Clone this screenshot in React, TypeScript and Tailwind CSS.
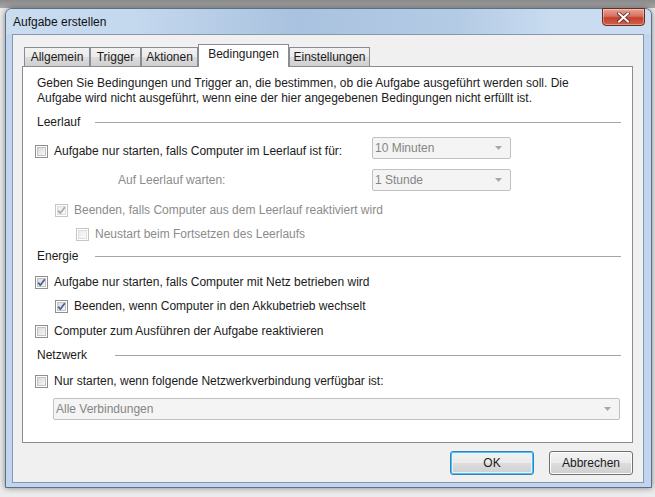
import React from 'react';

// Windows 7 "Aufgabe erstellen" dialog, Bedingungen tab.
const FONT = { fontFamily: '"Liberation Sans", Arial, sans-serif' };

type BoxProps = { checked?: boolean; disabled?: boolean };

function Checkbox({ checked, disabled }: BoxProps) {
  const border = disabled ? '#c6c6c6' : '#8e8f8f';
  const check = disabled ? '#a9a9a9' : '#4a5f97';
  return (
    <svg width="13" height="13" viewBox="0 0 13 13" className="shrink-0">
      <defs>
        <linearGradient id={disabled ? 'cbd' : 'cbe'} x1="0" y1="0" x2="1" y2="1">
          <stop offset="0" stopColor={disabled ? '#ececec' : '#d8d8d8'} />
          <stop offset="1" stopColor={disabled ? '#fbfbfb' : '#f8f8f8'} />
        </linearGradient>
      </defs>
      <rect x="0.5" y="0.5" width="12" height="12" fill="#fff" stroke={border} />
      <rect x="2.5" y="2.5" width="8" height="8" fill={`url(#${disabled ? 'cbd' : 'cbe'})`} stroke={disabled ? '#dedede' : '#c4c4c4'} />
      {checked && (
        <path d="M3.2 6.6 L5.3 9.2 L9.8 3.3" fill="none" stroke={check} strokeWidth="1.7" strokeLinejoin="round" />
      )}
    </svg>
  );
}

function CheckRow({
  label,
  checked,
  disabled,
  indent,
  mt,
}: BoxProps & { label: string; indent: string; mt: string }) {
  return (
    <div className={`flex h-[16px] items-center gap-[6px] ${indent} ${mt}`}>
      <Checkbox checked={checked} disabled={disabled} />
      <span className={disabled ? 'text-[#8b8b8b]' : 'text-[#1b1b1b]'}>{label}</span>
    </div>
  );
}

function Group({ label, lineStart, mt }: { label: string; lineStart: string; mt: string }) {
  return (
    <div className={`flex h-[16px] items-center pl-[14px] pr-[11px] ${mt}`}>
      <span className={`${lineStart} shrink-0 text-[#1b1b1b]`}>{label}</span>
      <div className="h-px flex-1 bg-[#a5a5a5]" />
    </div>
  );
}

function Select({ value, width }: { value: string; width: string }) {
  return (
    <div
      className={`flex h-[22px] ${width} items-center justify-between rounded-[2px] border border-[#c2c2c2] bg-[#f4f4f4] pl-[2px] pr-[8px] text-[#858585]`}
    >
      <span>{value}</span>
      <svg width="7" height="4" viewBox="0 0 7 4">
        <path d="M0 0 H7 L3.5 4 Z" fill="#a8a8a8" />
      </svg>
    </div>
  );
}

function Tab({ label, w, active }: { label: string; w: string; active?: boolean }) {
  if (active) {
    return (
      <div
        className={`relative z-10 -mb-px flex h-[23px] ${w} items-center justify-center border border-b-0 border-[#898c95] bg-white pb-[3px] text-[#1b1b1b]`}
      >
        {label}
      </div>
    );
  }
  return (
    <div
      className={`flex h-[19px] ${w} items-center justify-center border border-b-0 border-[#898c95] bg-[linear-gradient(to_bottom,#f2f2f2,#ebebeb_50%,#dddddd_51%,#cfcfcf)] pt-[1px] text-[#1b1b1b]`}
    >
      {label}
    </div>
  );
}

function Button({ label, focused }: { label: string; focused?: boolean }) {
  return (
    <div
      className={`flex h-[24px] w-[84px] items-center justify-center rounded-[3px] border bg-[linear-gradient(to_bottom,#f2f2f2,#ebebeb_50%,#dddddd_51%,#cfcfcf)] text-[#1b1b1b] ${
        focused
          ? 'border-[#3c7fb1] shadow-[inset_0_0_0_1px_#48c2f9,inset_0_0_0_2px_#e3f4fc]'
          : 'border-[#707070] shadow-[inset_0_0_0_1px_#fcfcfc]'
      }`}
    >
      {label}
    </div>
  );
}

export default function App() {
  return (
    <div
      className="h-[497px] w-[655px] overflow-hidden bg-[linear-gradient(to_bottom,#8a8a8a_0px,#a9a9a9_8px,#ececec_8px)] pl-[5px] pt-[8px] text-[12px] leading-[15px]"
      style={FONT}
    >
      {/* window frame */}
      <div className="flex h-[480px] w-[647px] flex-col rounded-t-[7px] border border-[#5d6f86] bg-[#c1d6ee] shadow-[0_0_6px_rgba(0,0,0,0.45)]">
        {/* title bar */}
        <div className="flex h-[25px] shrink-0 items-start justify-between rounded-t-[6px] bg-[linear-gradient(to_right,#c9dcf0_0%,#c4d8ee_20%,#a9c2df_45%,#b4cbe5_70%,#c9dcf0_85%)] pl-[7px] pr-[6px]">
          <span className="mt-[6px] text-[12px] text-[#111]">Aufgabe erstellen</span>
          <div className="-mt-px flex h-[18px] w-[43px] items-center justify-center rounded-b-[4px] border border-[#6b2a22] bg-[linear-gradient(to_bottom,#e8a496,#d6715f_45%,#c4402b_55%,#d1614c)] shadow-[inset_0_0_0_1px_rgba(255,255,255,0.35)]">
            <svg width="13" height="11" viewBox="0 0 13 11">
              <path d="M2 1.5 L11 9.5 M11 1.5 L2 9.5" stroke="#5a2a22" strokeWidth="3.6" strokeLinecap="square" />
              <path d="M2 1.5 L11 9.5 M11 1.5 L2 9.5" stroke="#ffffff" strokeWidth="2" strokeLinecap="square" />
            </svg>
          </div>
        </div>

        {/* client area */}
        <div className="ml-[6px] flex h-[449px] w-[632px] flex-col border border-[#8797ab] bg-[#f0f0f0] pl-[9px] pt-[9px]">
          <div className="flex items-end pl-[2px]">
            <Tab label="Allgemein" w="w-[66px]" />
            <Tab label="Trigger" w="w-[51px]" />
            <Tab label="Aktionen" w="w-[57px]" />
            <Tab label="Bedingungen" w="w-[91px]" active />
            <Tab label="Einstellungen" w="w-[81px]" />
          </div>

          <div className="flex h-[377px] w-[611px] flex-col border border-[#898c95] bg-white">
            <p className="mt-[9px] whitespace-nowrap pl-[14px] text-[#1b1b1b]">
              Geben Sie Bedingungen und Trigger an, die bestimmen, ob die Aufgabe ausgeführt werden soll. Die
              <br />
              Aufgabe wird nicht ausgeführt, wenn eine der hier angegebenen Bedingungen nicht erfüllt ist.
            </p>

            <Group label="Leerlauf" lineStart="w-[58px]" mt="mt-[8px]" />

            <div className="mt-[7px] flex h-[22px] pl-[12px]">
              <div className="w-[337px] pt-[6px]">
                <CheckRow label="Aufgabe nur starten, falls Computer im Leerlauf ist für:" indent="" mt="" />
              </div>
              <Select value="10 Minuten" width="w-[139px]" />
            </div>

            <div className="mt-[10px] flex h-[22px] items-center pl-[12px]">
              <div className="w-[337px] pl-[83px] text-[#8b8b8b]">Auf Leerlauf warten:</div>
              <Select value="1 Stunde" width="w-[139px]" />
            </div>

            <CheckRow label="Beenden, falls Computer aus dem Leerlauf reaktiviert wird" checked disabled indent="pl-[32px]" mt="mt-[11px]" />
            <CheckRow label="Neustart beim Fortsetzen des Leerlaufs" disabled indent="pl-[53px]" mt="mt-[8px]" />

            <Group label="Energie" lineStart="w-[58px]" mt="mt-[6px]" />

            <CheckRow label="Aufgabe nur starten, falls Computer mit Netz betrieben wird" checked indent="pl-[12px]" mt="mt-[10px]" />
            <CheckRow label="Beenden, wenn Computer in den Akkubetrieb wechselt" checked indent="pl-[32px]" mt="mt-[8px]" />
            <CheckRow label="Computer zum Ausführen der Aufgabe reaktivieren" indent="pl-[12px]" mt="mt-[9px]" />

            <Group label="Netzwerk" lineStart="w-[78px]" mt="mt-[8px]" />

            <CheckRow label="Nur starten, wenn folgende Netzwerkverbindung verfügbar ist:" indent="pl-[12px]" mt="mt-[10px]" />

            <div className="mt-[9px] pl-[30px]">
              <Select value="Alle Verbindungen" width="w-[567px]" />
            </div>
          </div>

          <div className="mt-[8px] flex w-[611px] justify-end gap-[15px]">
            <Button label="OK" focused />
            <Button label="Abbrechen" />
          </div>
        </div>
      </div>
    </div>
  );
}
